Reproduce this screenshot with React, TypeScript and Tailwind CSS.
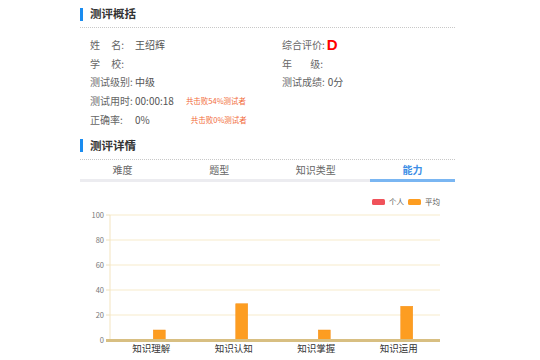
import React from 'react';

const font = { fontFamily: '"Microsoft YaHei", "Noto Sans CJK SC", sans-serif' };

const SectionTitle = ({ text }: { text: string }) => (
  <div className="flex items-center h-[24px]">
    <div className="w-[3px] h-[13px] bg-[#1a8cf0]" />
    <span className="ml-[7px] text-[11.5px] font-bold text-[#333]">{text}</span>
  </div>
);

const Dotted = () => <div className="border-t border-dotted border-[#c8c8c8]" />;

const categories = ['知识理解', '知识认知', '知识掌握', '知识运用'];
const avg = [8, 29, 8, 27];

const Chart = () => {
  const x0 = 30;
  const x1 = 360;
  const top = 25;
  const bottom = 150;
  const scale = (bottom - top) / 100;
  const step = (x1 - x0) / 4;
  return (
    <svg width="375" height="170" className="block">
      {/* legend */}
      <rect x="292" y="9" width="13" height="6" rx="1.5" fill="#f0525a" />
      <text x="309" y="15" fontSize="7.5" fill="#555">个人</text>
      <rect x="328" y="9" width="13" height="6" rx="1.5" fill="#fd9d21" />
      <text x="345" y="15" fontSize="7.5" fill="#555">平均</text>
      {[0, 20, 40, 60, 80, 100].map((v) => {
        const y = bottom - v * scale;
        return (
          <g key={v}>
            {v > 0 && <line x1={x0} x2={x1} y1={y} y2={y} stroke="#f7ebcb" strokeWidth="1" />}
            <line x1={x0 - 4} x2={x0} y1={y} y2={y} stroke="#f0e2bd" strokeWidth="1" />
            <text x={x0 - 6} y={y + 3} fontSize="7.5" fill="#777" textAnchor="end">{v}</text>
          </g>
        );
      })}
      <line x1={x0} x2={x0} y1={top} y2={bottom} stroke="#f3e4bf" strokeWidth="1" />
      {avg.map((v, i) => {
        const cx = x0 + step * i + step / 2;
        const h = v * scale;
        return (
          <g key={i}>
            <rect x={cx + 2} y={bottom - h} width="12" height={h} fill="#fd9d21" stroke="#f7921a" strokeWidth="0.5" />
            <text x={cx} y={bottom + 12} fontSize="9.5" fill="#333" textAnchor="middle">{categories[i]}</text>
          </g>
        );
      })}
      <line x1={x0 - 4} x2={x1} y1={bottom + 0.5} y2={bottom + 0.5} stroke="#d8bf82" strokeWidth="3" />
    </svg>
  );
};

const Row = ({ label, value, extra, extraPad }: { label: React.ReactNode; value?: React.ReactNode; extra?: string; extraPad?: string }) => (
  <div className="flex items-center h-[18.75px] text-[10px] text-[#666]">
    <span className="w-[45px] shrink-0">{label}</span>
    <span className="text-[#555]">{value}</span>
    {extra && <span className={`text-[7.5px] text-[#f26c3a] ${extraPad}`}>{extra}</span>}
  </div>
);

export default function App() {
  return (
    <div className="w-[540px] h-[360px] bg-white overflow-hidden" style={font}>
      <div className="ml-[80px] w-[375px] pt-[2px]">
        <SectionTitle text="测评概括" />
        <div className="mt-[1px]"><Dotted /></div>
        <div className="flex pt-[7px] pl-[10px]">
          <div className="w-[192px]">
            <Row label={<span className="flex justify-between w-[38px] pr-[4px]"><span>姓</span><span>名:</span></span>} value="王绍辉" />
            <Row label={<span className="flex justify-between w-[38px] pr-[4px]"><span>学</span><span>校:</span></span>} />
            <Row label="测试级别:" value="中级" />
            <Row label="测试用时:" value="00:00:18" extra="共击败54%测试者" extraPad="ml-[12px]" />
            <Row label="正确率:" value="0%" extra="共击败0%测试者" extraPad="ml-[41px]" />
          </div>
          <div className="flex-1">
            <div className="flex items-center h-[18.75px] text-[10px] text-[#666]">
              <span>综合评价:</span>
              <span className="ml-[2px] text-[15px] font-bold text-[#f00] leading-none" style={{ fontFamily: '"Liberation Sans", sans-serif' }}>D</span>
            </div>
            <div className="flex items-center h-[18.75px] text-[10px] text-[#666]">
              <span className="flex justify-between w-[41px]"><span>年</span><span>级:</span></span>
            </div>
            <div className="flex items-center h-[18.75px] text-[10px] text-[#666]">
              <span>测试成绩:</span>
              <span className="ml-[3px] text-[#555]">0分</span>
            </div>
          </div>
        </div>
        <div className="mt-[5px]">
          <SectionTitle text="测评详情" />
        </div>
        <div className="mt-[1px]"><Dotted /></div>
        <div className="flex justify-between text-[10px] text-[#666] border-b-[3px] border-[#ececf0]">
          {['难度', '题型', '知识类型', '能力'].map((t, i) => (
            <div
              key={t}
              className={`w-[85px] h-[22px] flex items-center justify-center -mb-[3px] border-b-[3px] ${
                i === 3 ? 'border-[#7ab6f2] text-[#3d8ee6] font-bold' : 'border-transparent'
              }`}
            >
              {t}
            </div>
          ))}
        </div>
        <div className="mt-[8px]">
          <Chart />
        </div>
      </div>
    </div>
  );
}
